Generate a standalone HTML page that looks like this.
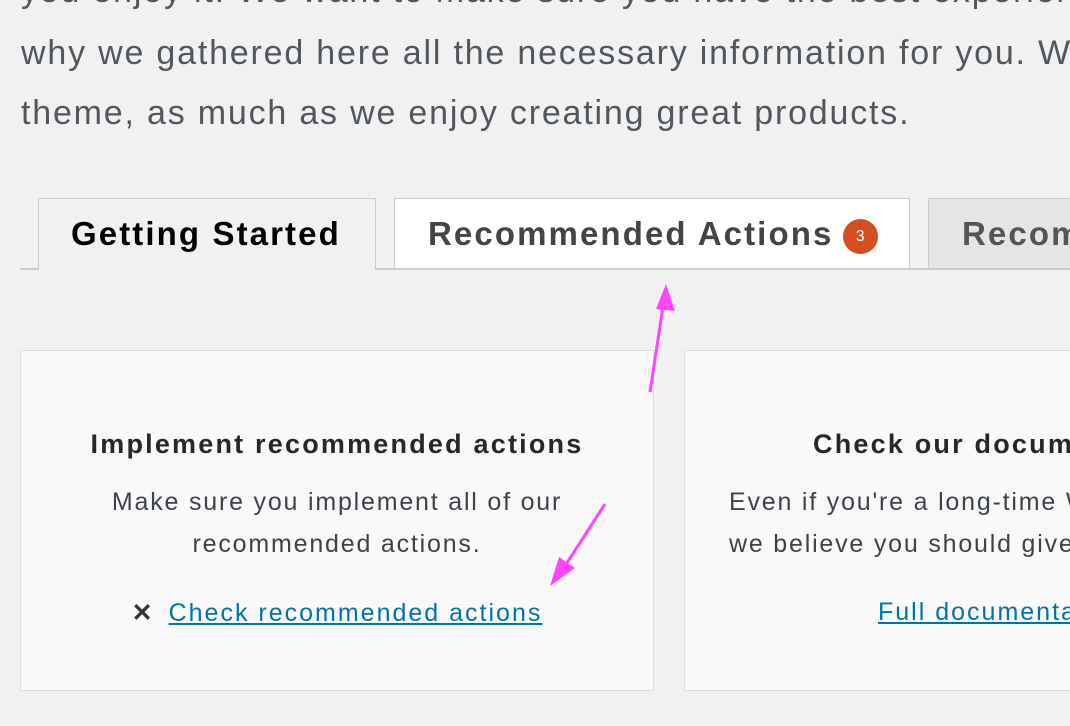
<!DOCTYPE html>
<html><head><meta charset="utf-8"><style>
html,body{overflow:hidden}
body{margin:0;width:1070px;height:726px;background:#f1f1f1;font-family:"Liberation Sans",sans-serif;position:relative}
.t{position:absolute;white-space:nowrap}
.p{color:#50575e;font-size:34px;letter-spacing:1.8px;left:21px}
.tab{position:absolute;top:198px;height:70px;border:1px solid #ccc;border-bottom:none;box-sizing:border-box;font-size:33px;font-weight:bold;line-height:70px;white-space:nowrap;overflow:hidden;letter-spacing:2.1px}
.card{position:absolute;top:350px;height:341px;background:#f9f9f9;border:1px solid #ddd;box-sizing:border-box;overflow:hidden;text-align:center;color:#3c434a}
</style></head><body>
<div class="t p" style="top:-28px">you enjoy it. We want to make sure you have the best experience using the theme and that is</div>
<div class="t p" style="top:34px">why we gathered here all the necessary information for you. We hope you will enjoy using our</div>
<div class="t p" style="top:94px">theme, as much as we enjoy creating great products.</div>
<div style="position:absolute;left:20px;top:268px;width:1050px;height:2px;background:#ccc"></div>
<div class="tab" style="left:38px;width:338px;height:72px;background:#f1f1f1;color:#000;padding-left:32px">Getting Started</div>
<div class="tab" style="left:394px;width:516px;background:#fff;color:#444;padding-left:33px;border-bottom:2px solid #ccc;height:72px">Recommended Actions <span style="display:inline-block;width:35px;height:35px;border-radius:50%;background:#d54e21;color:#fff;font-size:16px;font-weight:normal;letter-spacing:0;line-height:35px;text-align:center;vertical-align:4px;margin-left:-2px">3</span></div>
<div class="tab" style="left:928px;width:160px;background:#e5e5e5;color:#555;padding-left:33px;border-bottom:2px solid #ccc;height:72px">Recommended Plugins</div>
<div class="card" style="left:20px;width:634px">
<div class="t" style="left:0;right:0;top:78px;font-size:27px;letter-spacing:2.2px;font-weight:bold;color:#23282d">Implement recommended actions</div>
<div class="t" style="left:0;right:0;top:130px;font-size:25px;letter-spacing:1.8px;line-height:42px">Make sure you implement all of our<br>recommended actions.</div>
<div class="t" style="left:0;right:0;top:247px;font-size:25px;letter-spacing:2px"><span style="font-weight:bold;color:#333;margin-right:14px">✕</span><a style="color:#0073aa;text-decoration:underline">Check recommended actions</a></div>
</div>
<div class="card" style="left:684px;width:600px">
<div class="t" style="left:128px;top:78px;font-size:27px;letter-spacing:2.2px;font-weight:bold;color:#23282d;text-align:left">Check our documentation</div>
<div class="t" style="left:44px;top:130px;font-size:25px;letter-spacing:1.8px;line-height:42px;text-align:left">Even if you're a long-time WordPress user,<br>we believe you should give our documentation</div>
<div class="t" style="left:193px;top:247px;font-size:25px;letter-spacing:2px"><a style="color:#0073aa;text-decoration:underline">Full documentation</a></div>
</div>
<svg style="position:absolute;left:0;top:0" width="1070" height="726">
<line x1="650" y1="392" x2="664" y2="300" stroke="#ff44ff" stroke-width="3"/>
<polygon points="666,284 656,309 675,311" fill="#ff44ff"/>
<line x1="605" y1="504" x2="565" y2="566" stroke="#ff44ff" stroke-width="3"/>
<polygon points="550,586 559,557 575,568" fill="#ff44ff"/>
</svg>
</body></html>
